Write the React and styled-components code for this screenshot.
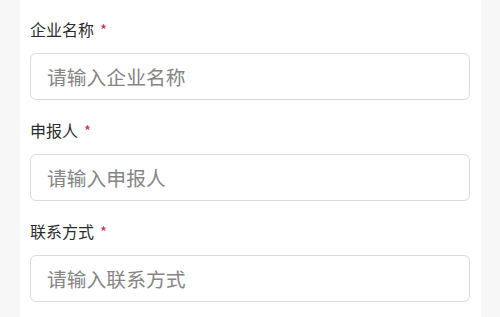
import React from "react";
import styled, { createGlobalStyle } from "styled-components";

const Global = createGlobalStyle`
  html, body { margin: 0; padding: 0; background: #f7f7f7; }
  body { font-family: "Noto Sans CJK SC", "Noto Sans", sans-serif; }
`;

const Page = styled.div`
  display: flex;
  padding: 0 19px 0 20px;
  height: 317px;
  overflow: hidden;
`;

const Panel = styled.div`
  flex: 1;
  background: #ffffff;
  padding: 18px 11px 0 10px;
  display: flex;
  flex-direction: column;
  gap: 19px;
`;

const Field = styled.div`
  display: flex;
  flex-direction: column;
  gap: 13px;
`;

const Label = styled.div`
  height: 22px;
  font-size: 16px;
  line-height: 22px;
  color: #2b2b2b;
`;

const Star = styled.span`
  color: #c8334a;
  margin-left: 6px;
  font-size: 15px;
  line-height: 0;
`;

const Input = styled.input`
  box-sizing: border-box;
  display: block;
  width: 100%;
  height: 47px;
  margin: 0;
  border: 1px solid #dadada;
  border-radius: 6px;
  padding: 0 16px;
  font-family: "Noto Sans CJK SC", "Noto Sans", sans-serif;
  font-size: 19.8px;
  color: #333;
  outline: none;
  background: #fff;
  &::placeholder { color: #858585; }
`;

const fields = [
  { label: "企业名称", ph: "请输入企业名称" },
  { label: "申报人", ph: "请输入申报人" },
  { label: "联系方式", ph: "请输入联系方式" },
];

export default function App() {
  return (
    <>
      <Global />
      <Page>
        <Panel>
          {fields.map((f) => (
            <Field key={f.label}>
              <Label>
                {f.label}
                <Star>*</Star>
              </Label>
              <Input placeholder={f.ph} />
            </Field>
          ))}
        </Panel>
      </Page>
    </>
  );
}
